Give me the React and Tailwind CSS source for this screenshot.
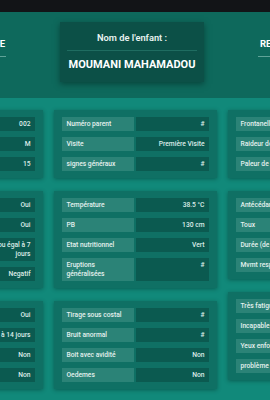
import React from 'react';

const columns = [
  [
    [['Numéro', '002'], ['Sexe', 'M'], ['Age (mois)', '15']],
    [['Fièvre', 'Oui'], ['Convulsions', 'Oui'], ['Durée de la fièvre', 'Inférieur ou égal à 7 jours'], ['Test paludisme', 'Negatif']],
    [['Diarrhée', 'Oui'], ['Durée de la diarrhée', 'Inférieur à 14 jours'], ['Sang dans les selles', 'Non'], ['Vomissements', 'Non']],
  ],
  [
    [['Numéro parent', '#'], ['Visite', 'Première Visite'], ['signes généraux', '#']],
    [['Température', '38.5 °C'], ['PB', '130 cm'], ['Etat nutritionnel', 'Vert'], ['Eruptions généralisées', '#']],
    [['Tirage sous costal', '#'], ['Bruit anormal', '#'], ['Boit avec avidité', 'Non'], ['Oedemes', 'Non']],
  ],
  [
    [['Frontanelle bombée', 'Non'], ['Raideur de la nuque', 'Non'], ['Paleur de la paume', 'Non']],
    [['Antécédants', 'Non'], ['Toux', 'Oui'], ['Durée (de la toux)', '#'], ['Mvmt respiratoires', '#']],
    [['Très fatigué', 'Non'], ['Incapable de boire', 'Non'], ['Yeux enfoncés', 'Non'], ['problème de peau', 'Non']],
  ],
];

function Row({ label, value }) {
  return (
    <div className="grid grid-cols-2 gap-[2px] text-[6.7px] leading-[9px] font-medium">
      <div className="bg-[#2b8377] text-[#e4f1ee] px-[5px] py-[2.5px]">{label}</div>
      <div className="bg-[#0b5a50] text-[#dcece8] px-[4px] py-[2.5px] text-right">{value}</div>
    </div>
  );
}

function Card({ rows }) {
  return (
    <div className="bg-[#0f7064] px-[8px] py-[7px] flex flex-col gap-[6px] shadow-[0_1px_4px_rgba(0,40,35,0.45)]">
      {rows.map(([label, value]) => (
        <Row key={label} label={label} value={value} />
      ))}
    </div>
  );
}

export default function App() {
  return (
    <div className="w-[270px] h-[400px] overflow-hidden bg-[#11897a]" style={{ fontFamily: 'Roboto, "Open Sans", sans-serif' }}>
      <div className="h-[12px] bg-[#121417]" />

      {/* Header */}
      <div className="h-[86px] bg-[#0e695c] flex justify-center items-start pt-[10px] gap-[54px] overflow-hidden">
        <div className="w-[100px] shrink-0 mt-[16px] border-b border-[#5fa398] pb-[6px] pr-[1px] text-right text-[9.5px] leading-[12px] font-bold text-white">
          IDENTITE
        </div>
        <div className="w-[144px] shrink-0 bg-[#0c5047] shadow-[0_2px_6px_rgba(0,30,25,0.5)] px-[7px] pt-[10px] pb-[10px] text-center">
          <div className="text-[9.3px] leading-[12px] font-semibold text-[#e8f3f1]">Nom de l'enfant :</div>
          <div className="h-[1px] bg-[#1f6d61] mt-[6px] mb-[7px]" />
          <div className="text-[11px] leading-[14px] font-bold text-white whitespace-nowrap">MOUMANI MAHAMADOU</div>
        </div>
        <div className="w-[106px] shrink-0 mt-[16px] border-b border-[#5fa398] pb-[6px] pl-[2px] text-[9.5px] leading-[12px] font-bold text-white whitespace-nowrap">
          RESULTATS
        </div>
      </div>

      {/* Body */}
      <div className="flex justify-center gap-[11px] pt-[12px]">
        {columns.map((cards, i) => (
          <div key={i} className="w-[163px] shrink-0 flex flex-col gap-[13px]">
            {cards.map((rows, j) => (
              <Card key={j} rows={rows} />
            ))}
          </div>
        ))}
      </div>
    </div>
  );
}
